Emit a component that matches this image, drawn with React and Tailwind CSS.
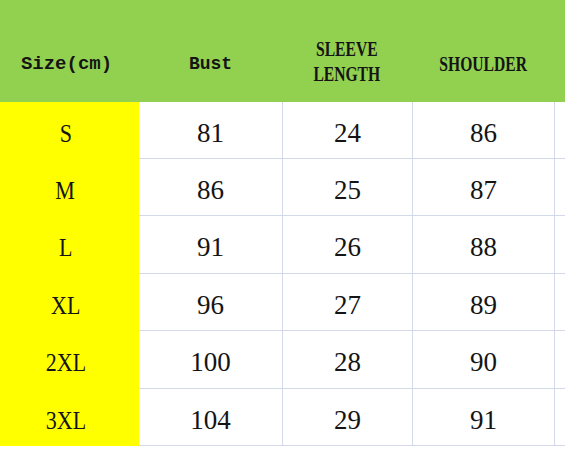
import React from 'react';

const rows = [
  ['S', '81', '24', '86'],
  ['M', '86', '25', '87'],
  ['L', '91', '26', '88'],
  ['XL', '96', '27', '89'],
  ['2XL', '100', '28', '90'],
  ['3XL', '104', '29', '91'],
];

const rowHeights = ['h-[57px]', 'h-[57px]', 'h-[58px]', 'h-[57px]', 'h-[58px]', 'h-[57px]'];

const cols = 'grid grid-cols-[139px_143px_130px_142px_1fr]';
const cell = "flex items-center justify-center border-b border-[#d3d9e8] pt-[6px] text-[27px] font-['Liberation_Serif',serif]";

const App = () => {
  return (
    <div className="w-[565px] h-[451px] bg-white overflow-hidden text-[#141414]">
      {/* Header */}
      <div className={`${cols} h-[102px] bg-[#92d050]`}>
        <div className="flex items-center justify-center pt-[26px] pr-[6px] text-[19px] font-bold font-['Liberation_Mono',monospace]">
          Size(cm)
        </div>
        <div className="flex items-center justify-center pt-[26px] text-[18px] font-bold font-['Liberation_Mono',monospace]">
          Bust
        </div>
        <div className="flex items-center justify-center pt-[22px] font-['Liberation_Serif',serif]">
          <span className="inline-block scale-x-[0.78] text-[20px] font-bold leading-[25px] text-center">
            SLEEVE<br />LENGTH
          </span>
        </div>
        <div className="flex items-center justify-center pt-[26px] font-['Liberation_Serif',serif]">
          <span className="inline-block scale-x-[0.78] text-[20px] font-bold">SHOULDER</span>
        </div>
        <div />
      </div>

      {/* Body */}
      {rows.map((row, i) => (
        <div key={i} className={`${cols} ${rowHeights[i]}`}>
          <div className="flex items-center justify-center bg-[#ffff00] pt-[6px] pr-[8px] font-['Liberation_Serif',serif]">
            <span className="inline-block scale-x-[0.88] text-[25px]">{row[0]}</span>
          </div>
          <div className={cell}>{row[1]}</div>
          <div className={`${cell} border-l`}>{row[2]}</div>
          <div className={`${cell} border-l`}>{row[3]}</div>
          <div className="border-b border-l border-[#d3d9e8]" />
        </div>
      ))}
    </div>
  );
};

export default App;
